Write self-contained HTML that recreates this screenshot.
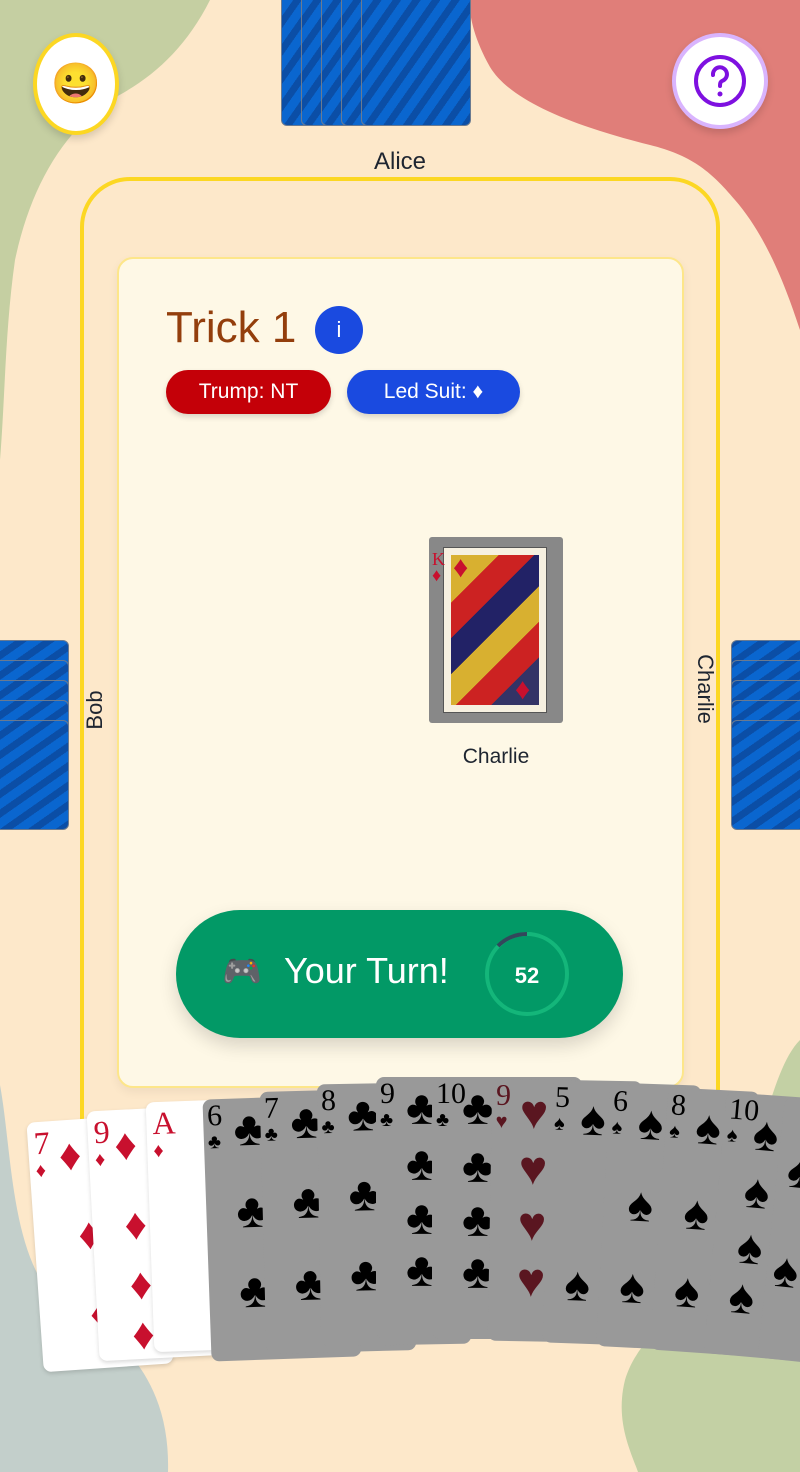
<!DOCTYPE html>
<html><head><meta charset="utf-8"><style>
*{margin:0;padding:0;box-sizing:border-box}
body{width:800px;height:1472px;overflow:hidden;position:relative;background:#fde8ca;font-family:"Liberation Sans",sans-serif}
.abs{position:absolute}
.back{position:absolute;border:1px solid #6a7a90;border-radius:6px;background:repeating-linear-gradient(-55deg,#0b4ea6 0 7px,#0a66cf 7px 16px)}
.back.h{background:repeating-linear-gradient(-35deg,#0b4ea6 0 7px,#0a66cf 7px 16px)}
.gc{position:absolute;width:150px;height:262px;background:#999;border-radius:8px;font-family:"Liberation Serif",serif;color:#000}
.gc .r{position:absolute;left:4px;top:4px;font-size:30px;line-height:26px}
.gc .s{position:absolute;left:4px;top:32px;font-size:20px}
.gc .p{position:absolute;font-size:48px;line-height:48px}
.wc{position:absolute;width:130px;height:250px;background:#fff;border-radius:8px;color:#c8102e;font-family:"Liberation Serif",serif;box-shadow:0 2px 4px rgba(0,0,0,.15)}
.wc .r{position:absolute;left:6px;top:6px;font-size:32px;line-height:30px}
.wc .s{position:absolute;left:6px;top:38px;font-size:20px}
.wc .p{position:absolute;font-size:44px}
</style></head><body>
<svg class="abs" style="left:0;top:0" width="800" height="1472">
<path d="M0 0H210C185 50 150 80 110 100C60 135 30 190 15 260C5 330 5 400 0 460Z" fill="#c5cfa2"/>
<path d="M469 0H800V330C790 300 770 240 735 200C710 170 690 155 650 145C570 125 510 100 490 67C475 40 470 20 469 0Z" fill="#e07e79"/>
<path d="M0 1085C12 1150 10 1250 55 1300C140 1340 170 1400 168 1472H0Z" fill="#c3cfcb"/>
<path d="M800 1040C770 1070 760 1160 720 1250C690 1310 640 1330 625 1380C615 1420 630 1450 638 1472H800Z" fill="#c3d0a4"/>
</svg>
<div class="back" style="left:281px;top:-10px;width:110px;height:136px"></div>
<div class="back" style="left:301px;top:-10px;width:110px;height:136px"></div>
<div class="back" style="left:321px;top:-10px;width:110px;height:136px"></div>
<div class="back" style="left:341px;top:-10px;width:110px;height:136px"></div>
<div class="back" style="left:361px;top:-10px;width:110px;height:136px"></div>
<div class="abs" style="left:33px;top:33px;width:86px;height:102px;border:4px solid #fcd723;border-radius:50%;background:#fff;box-shadow:0 4px 8px rgba(0,0,0,.15);text-align:center;font-size:40px;line-height:94px">😀</div>
<div class="abs" style="left:672px;top:33px;width:96px;height:96px;border:4px solid #d9b4fe;border-radius:50%;background:#fff;box-shadow:0 4px 8px rgba(0,0,0,.15)">
<svg width="88" height="88" viewBox="0 0 88 88"><circle cx="44" cy="44" r="24" fill="none" stroke="#7e10e0" stroke-width="4"/><path d="M37 38a7 7 0 1 1 9 6c-2 1-2 3-2 5" fill="none" stroke="#7e10e0" stroke-width="4" stroke-linecap="round"/><circle cx="44" cy="57" r="2.5" fill="#7e10e0"/></svg></div>
<div class="abs" style="left:0;width:800px;top:148px;text-align:center;font-size:24px;color:#1e2530">Alice</div>
<div class="abs" style="left:80px;top:177px;width:640px;height:1000px;border:4px solid #fcd723;border-radius:50px"></div>
<div class="abs" style="left:117px;top:257px;width:567px;height:831px;background:#fef8e6;border:2px solid #fde68a;border-radius:16px;box-shadow:0 4px 10px rgba(0,0,0,.06)"></div>
<div class="abs" style="left:166px;top:303px;font-size:44px;color:#933e0c">Trick 1</div>
<div class="abs" style="left:315px;top:306px;width:48px;height:48px;border-radius:50%;background:#1a4ae0;color:#fff;text-align:center;line-height:48px;font-size:22px">i</div>
<div class="abs" style="left:166px;top:370px;width:165px;height:44px;border-radius:22px;background:#c40008;color:#fff;text-align:center;line-height:44px;font-size:21px;box-shadow:0 3px 6px rgba(0,0,0,.15)">Trump: NT</div>
<div class="abs" style="left:347px;top:370px;width:173px;height:44px;border-radius:22px;background:#1a4ae0;color:#fff;text-align:center;line-height:44px;font-size:21px;box-shadow:0 3px 6px rgba(0,0,0,.15)">Led Suit: ♦</div>
<div class="abs" style="left:429px;top:537px;width:134px;height:186px;background:#888;border-radius:3px">
<div class="abs" style="left:14px;top:10px;width:104px;height:166px;background:#f6f0e0;border:1px solid #555"></div>
<div class="abs" style="left:22px;top:18px;width:88px;height:150px;background:linear-gradient(135deg,#d8b030 0 20%,#c22 20% 35%,#226 35% 50%,#d8b030 50% 65%,#c22 65% 80%,#336 80%)"></div>
<div class="abs" style="left:3px;top:14px;color:#c8102e;font-family:'Liberation Serif',serif;font-size:18px;line-height:16px">K<br>♦</div>
<div class="abs" style="left:24px;top:14px;color:#c8102e;font-size:30px">♦</div>
<div class="abs" style="left:86px;top:136px;color:#c8102e;font-size:30px">♦</div>
</div>
<div class="abs" style="left:429px;top:745px;width:134px;text-align:center;font-size:21px;color:#1e2530">Charlie</div>
<div class="back h" style="left:-40px;top:640px;width:109px;height:110px"></div>
<div class="back h" style="left:-40px;top:660px;width:109px;height:110px"></div>
<div class="back h" style="left:-40px;top:680px;width:109px;height:110px"></div>
<div class="back h" style="left:-40px;top:700px;width:109px;height:110px"></div>
<div class="back h" style="left:-40px;top:720px;width:109px;height:110px"></div>
<div class="back h" style="left:731px;top:640px;width:109px;height:110px"></div>
<div class="back h" style="left:731px;top:660px;width:109px;height:110px"></div>
<div class="back h" style="left:731px;top:680px;width:109px;height:110px"></div>
<div class="back h" style="left:731px;top:700px;width:109px;height:110px"></div>
<div class="back h" style="left:731px;top:720px;width:109px;height:110px"></div>
<div class="abs" style="left:60px;top:697px;width:70px;text-align:center;font-size:22px;color:#1e2530;transform:rotate(-90deg)">Bob</div>
<div class="abs" style="left:660px;top:676px;width:90px;text-align:center;font-size:22px;color:#1e2530;transform:rotate(90deg)">Charlie</div>
<div class="abs" style="left:176px;top:910px;width:447px;height:128px;border-radius:64px;background:#029966;box-shadow:0 8px 18px rgba(0,0,0,.15)"></div>
<div class="abs" style="left:222px;top:952px;font-size:32px">🎮</div>
<div class="abs" style="left:284px;top:950px;font-size:36px;color:#fff">Your Turn!</div>
<svg class="abs" style="left:484px;top:931px" width="86" height="86"><circle cx="43" cy="43" r="40" fill="none" stroke="#14b67a" stroke-width="4"/><path d="M43 3A40 40 0 0 0 14 15" fill="none" stroke="#33475b" stroke-width="4"/><text x="43" y="52" text-anchor="middle" fill="#fff" font-family="Liberation Sans" font-weight="bold" font-size="22">52</text></svg>
<div class="wc" style="left:35px;top:1118px;transform:rotate(-4deg)"><div class="r">7</div><div class="s">♦</div><div class="p" style="left:30px;top:10px">♦</div><div class="p" style="left:44px;top:90px">♦</div><div class="p" style="left:50px;top:170px">♦</div></div>
<div class="wc" style="left:93px;top:1108px;transform:rotate(-3deg)"><div class="r">9</div><div class="s">♦</div><div class="p" style="left:26px;top:10px">♦</div><div class="p" style="left:32px;top:90px">♦</div><div class="p" style="left:34px;top:150px">♦</div><div class="p" style="left:34px;top:200px">♦</div></div>
<div class="wc" style="left:150px;top:1100px;transform:rotate(-2deg)"><div class="r">A</div><div class="s">♦</div></div>
<div class="gc" style="left:207px;top:1097px;transform:rotate(-2deg)"><div class="r">6</div><div class="s">♣</div><div class="p" style="left:30px;top:8px">♣</div><div class="p" style="left:30px;top:90px">♣</div><div class="p" style="left:30px;top:170px">♣</div></div>
<div class="gc" style="left:263px;top:1090px;transform:rotate(-1.5deg)"><div class="r">7</div><div class="s">♣</div><div class="p" style="left:30px;top:8px">♣</div><div class="p" style="left:30px;top:88px">♣</div><div class="p" style="left:30px;top:170px">♣</div></div>
<div class="gc" style="left:319px;top:1083px;transform:rotate(-1deg)"><div class="r">8</div><div class="s">♣</div><div class="p" style="left:30px;top:8px">♣</div><div class="p" style="left:30px;top:88px">♣</div><div class="p" style="left:30px;top:168px">♣</div></div>
<div class="gc" style="left:376px;top:1077px"><div class="r">9</div><div class="s">♣</div><div class="p" style="left:30px;top:8px">♣</div><div class="p" style="left:30px;top:64px">♣</div><div class="p" style="left:30px;top:118px">♣</div><div class="p" style="left:30px;top:170px">♣</div></div>
<div class="gc" style="left:432px;top:1077px"><div class="r">10</div><div class="s">♣</div><div class="p" style="left:30px;top:8px">♣</div><div class="p" style="left:30px;top:66px">♣</div><div class="p" style="left:30px;top:120px">♣</div><div class="p" style="left:30px;top:172px">♣</div></div>
<div class="gc" style="left:490px;top:1080px;transform:rotate(1deg);color:#5a1620"><div class="r">9</div><div class="s">♥</div><div class="p" style="left:28px;top:10px">♥</div><div class="p" style="left:28px;top:66px">♥</div><div class="p" style="left:28px;top:122px">♥</div><div class="p" style="left:28px;top:178px">♥</div></div>
<div class="gc" style="left:547px;top:1083px;transform:rotate(2deg)"><div class="r">5</div><div class="s">♠</div><div class="p" style="left:30px;top:14px">♠</div><div class="p" style="left:20px;top:180px">♠</div></div>
<div class="gc" style="left:603px;top:1088px;transform:rotate(3deg)"><div class="r">6</div><div class="s">♠</div><div class="p" style="left:30px;top:14px">♠</div><div class="p" style="left:24px;top:96px">♠</div><div class="p" style="left:20px;top:178px">♠</div></div>
<div class="gc" style="left:659px;top:1093px;transform:rotate(4deg)"><div class="r">8</div><div class="s">♠</div><div class="p" style="left:30px;top:14px">♠</div><div class="p" style="left:24px;top:100px">♠</div><div class="p" style="left:20px;top:178px">♠</div></div>
<div class="gc" style="left:715px;top:1098px;transform:rotate(5deg)"><div class="r">10</div><div class="s">♠</div><div class="p" style="left:30px;top:16px">♠</div><div class="p" style="left:26px;top:74px">♠</div><div class="p" style="left:24px;top:130px">♠</div><div class="p" style="left:20px;top:180px">♠</div></div>
<div class="gc" style="left:771px;top:1104px;transform:rotate(6deg)"><div class="p" style="left:10px;top:50px">♠</div><div class="p" style="left:6px;top:150px">♠</div></div>
</body></html>
